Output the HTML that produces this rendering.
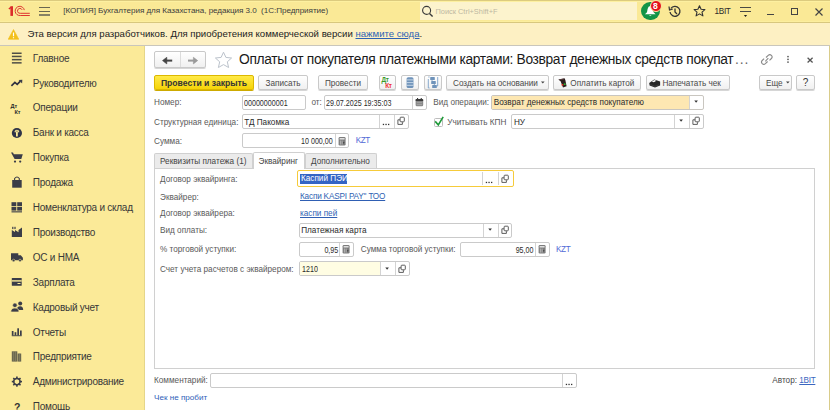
<!DOCTYPE html>
<html><head><meta charset="utf-8">
<style>
*{box-sizing:border-box;margin:0;padding:0}
html,body{width:830px;height:410px;overflow:hidden;background:#fff;font-family:"Liberation Sans",sans-serif;color:#333}
.a{position:absolute}
.t{position:absolute;white-space:pre;line-height:1}
#top{left:0;top:0;width:830px;height:23px;background:#fae996;border-top:1px solid #dccb7e;border-bottom:1px solid #d8c77e;box-shadow:inset 0 1px 0 #fdf0a0, inset 0 -1px 0 #fcee9e}
#warn{left:0;top:23px;width:830px;height:23px;background:#fdf0c3;border-bottom:1px solid #c9c6bc}
#side{left:0;top:46px;width:145px;height:364px;background:#fbea98;border-right:1px solid #e5d68a}
#form{left:145px;top:46px;width:684px;height:364px;background:#fff}
#rstrip{left:829px;top:46px;width:1px;height:364px;background:#d9cc8a}
.sn{font-size:10px;letter-spacing:-0.25px;color:#383838}
.btn{position:absolute;height:15px;border:1px solid #c6c6c6;border-radius:2px;background:linear-gradient(#fff,#f1f1f1);box-shadow:0 1px 0 #d9d9d9;font-size:8.3px;color:#444;text-align:center;line-height:13px;white-space:pre}
.fld{position:absolute;height:14.5px;border:1px solid #c9c9c9;border-radius:2px;background:#fff;font-size:8.2px;color:#2b2b2b;line-height:14px;white-space:pre;overflow:hidden}
.lbl{font-size:8.2px;color:#5a5a5a}
.sep{position:absolute;top:0;bottom:0;width:1px;background:#d5d5d5}
.lnk{font-size:8.2px;color:#2f5fb3;text-decoration:underline}
.fb{border-radius:2px}
</style></head><body>
<div id="top" class="a"></div>
<div id="warn" class="a"></div>
<div id="side" class="a"></div>
<div id="form" class="a"></div>
<div id="rstrip" class="a"></div>

<!-- top bar -->
<svg class="a" style="left:0;top:0" width="34" height="22" viewBox="0 0 34 22">
 <rect x="10.4" y="6.2" width="2.6" height="9.7" fill="#dc2b2b"/>
 <path d="M8.9 9 L11 7.2" stroke="#dc2b2b" stroke-width="1.5" fill="none"/>
 <path d="M24.3 10.1 A4.6 4.6 0 1 0 20.3 15.5 L29.8 15.5" stroke="#dc2b2b" stroke-width="0.95" fill="none"/>
 <path d="M22.2 9.9 A2.45 2.45 0 1 0 20.3 13.3 L29.8 13.3" stroke="#dc2b2b" stroke-width="0.95" fill="none"/>
</svg>
<div class="a" style="left:39.2px;top:7px;width:10.6px;height:1.2px;background:#6a6650"></div>
<div class="a" style="left:39.2px;top:10.9px;width:10.6px;height:1.2px;background:#6a6650"></div>
<div class="a" style="left:39.2px;top:14.4px;width:10.6px;height:1.2px;background:#878164"></div>
<div class="t" style="left:63.3px;top:6.8px;font-size:8.1px;letter-spacing:-0.05px;color:#3d3d3d">[КОПИЯ] Бухгалтерия для Казахстана, редакция 3.0  (1С:Предприятие)</div>
<div class="a" style="left:420px;top:2px;width:217px;height:18px;background:#fcf3cd"></div>
<svg class="a" style="left:421px;top:5px" width="13" height="13" viewBox="0 0 13 13"><circle cx="5.6" cy="5.4" r="4" stroke="#3a3a3a" stroke-width="1.1" fill="none"/><path d="M8.5 8.4 L11.6 11.5" stroke="#3a3a3a" stroke-width="1.4"/></svg>
<div class="t" style="left:435.5px;top:7.5px;font-size:7.4px;color:#bdb8a2">Поиск Ctrl+Shift+F</div>
<!-- bell -->
<div class="a" style="left:641.3px;top:1.8px;width:18.5px;height:18.5px;border-radius:50%;background:#129447"></div>
<svg class="a" style="left:640px;top:0" width="24" height="22" viewBox="640 0 24 22"><path d="M645 14.3 L647 12.2 L647.6 9 Q648.2 6.2 650.3 6 Q652.4 6.2 653 9 L653.6 12.2 L655.6 14.3 Z" fill="#fff"/><path d="M649 15.2 Q650.3 16.6 651.6 15.2 Z" fill="#fff"/></svg>
<div class="a" style="left:649.6px;top:0.4px;width:12px;height:12px;border-radius:50%;background:#e5121a;border:0.8px solid #fbe9a6"></div>
<div class="t" style="left:652.9px;top:2.4px;font-size:8.6px;font-weight:bold;color:#fff">8</div>
<svg class="a" style="left:668px;top:5px" width="14" height="13" viewBox="0 0 14 13"><path d="M2.8 3.5 A5 5 0 1 1 2 7" stroke="#333" stroke-width="1.3" fill="none"/><path d="M1 1.5 L1.5 5 L4.8 4" stroke="#333" stroke-width="1.2" fill="none"/><path d="M7 3.5 L7 7 L9 9" stroke="#333" stroke-width="1.3" fill="none"/></svg>
<svg class="a" style="left:692.5px;top:5px" width="13" height="12" viewBox="0 0 13 12"><path d="M6.5 0.8 L8.1 4.3 L11.9 4.6 L9 7.1 L9.9 10.9 L6.5 8.9 L3.1 10.9 L4 7.1 L1.1 4.6 L4.9 4.3 Z" stroke="#333" stroke-width="1.1" fill="none" stroke-linejoin="round"/></svg>
<div class="t" style="left:714.6px;top:7.9px;font-size:8.2px;letter-spacing:-0.35px;color:#2a2a2a">1BIT</div>
<div class="a" style="left:740.4px;top:7px;width:10.4px;height:1.2px;background:#4a4a44"></div><div class="a" style="left:740.4px;top:10.9px;width:10.4px;height:1.2px;background:#4a4a44"></div><svg class="a" style="left:743px;top:13.5px" width="5" height="4" viewBox="0 0 5 4"><path d="M0.9 1 H4.1 L2.5 3 Z" fill="#222"/></svg>
<div class="a" style="left:767px;top:14px;width:7px;height:1.2px;background:#444"></div>
<div class="a" style="left:791px;top:8.4px;width:7px;height:6.4px;border:1.2px solid #444"></div>
<svg class="a" style="left:815px;top:7.5px" width="8" height="8" viewBox="0 0 8 8"><path d="M0.5 0.5 L7.5 7.5 M7.5 0.5 L0.5 7.5" stroke="#444" stroke-width="1.2"/></svg>

<!-- warning -->
<svg class="a" style="left:8px;top:28.5px" width="11" height="11" viewBox="0 0 11 11"><path d="M5.5 0.5 L10.8 10.3 L0.2 10.3 Z" fill="#f3c01a" stroke="#f3c01a" stroke-width="0.6" stroke-linejoin="round"/><path d="M5.5 3.5 V7.2 M5.5 8.2 V9.3" stroke="#fff" stroke-width="1.2"/></svg>
<div class="t" style="left:27.4px;top:28.9px;font-size:9.6px;color:#222">Эта версия для разработчиков. Для приобретения коммерческой версии <span style="color:#2d62b5;text-decoration:underline">нажмите сюда</span>.</div>

<!-- sidebar -->
<div class="t sn" style="left:32.8px;top:53.6px">Главное</div>
<div class="t sn" style="left:32.8px;top:78.5px">Руководителю</div>
<div class="t sn" style="left:32.8px;top:103.4px">Операции</div>
<div class="t sn" style="left:32.8px;top:128.3px">Банк и касса</div>
<div class="t sn" style="left:32.8px;top:153.2px">Покупка</div>
<div class="t sn" style="left:32.8px;top:178.1px">Продажа</div>
<div class="t sn" style="left:32.8px;top:203.0px">Номенклатура и склад</div>
<div class="t sn" style="left:32.8px;top:227.9px">Производство</div>
<div class="t sn" style="left:32.8px;top:252.8px">ОС и НМА</div>
<div class="t sn" style="left:32.8px;top:277.7px">Зарплата</div>
<div class="t sn" style="left:32.8px;top:302.6px">Кадровый учет</div>
<div class="t sn" style="left:32.8px;top:327.5px">Отчеты</div>
<div class="t sn" style="left:32.8px;top:352.4px">Предприятие</div>
<div class="t sn" style="left:32.8px;top:377.3px">Администрирование</div>
<div class="t sn" style="left:32.8px;top:402.2px">Помощь</div>
<svg class="a" style="left:0;top:0" width="30" height="410" viewBox="0 0 30 410">
<g fill="#3b3d48">
 <rect x="11.9" y="52.5" width="9.7" height="1.5" fill="#4f4e46"/>
 <rect x="11.9" y="55.7" width="9.7" height="1.5" fill="#4f4e46"/>
 <rect x="11.9" y="58.9" width="9.7" height="1.5" fill="#4f4e46"/>
 <rect x="11.9" y="62.1" width="9.7" height="1.5" fill="#4f4e46"/>
 <path d="M11.4 85.8 L14.9 82.4 L17.2 84.3 L20.4 81.1" stroke="#2f3140" stroke-width="1.7" fill="none"/>
 <path d="M18.6 80 L22.3 79.8 L22.1 83.5 Z"/>
 <text x="10.6" y="108.3" font-family="Liberation Sans" font-weight="bold" font-size="5.6" letter-spacing="-0.2" fill="#2a2a2a">Дт</text>
 <text x="14.6" y="113.5" font-family="Liberation Sans" font-weight="bold" font-size="5.6" letter-spacing="-0.2" fill="#2a2a2a">Кт</text>
 <circle cx="16.9" cy="133" r="5.1" fill="#2f3447"/>
 <path d="M14.6 131.6 Q14.6 129.8 16.9 129.8 Q19.2 129.8 19.2 131.6 V132.3 H17.8 V136.6 H16 V132.3 H14.6 Z" fill="#fbea98"/><path d="M15.6 131.2 H18.2" stroke="#2f3447" stroke-width="0.5"/>
 <path d="M11 152.5 L13 152.5 L13.8 154.3 L22.8 154.3 L21.3 159 L14.6 159 Z"/>
 <circle cx="15" cy="161.6" r="1.1"/><circle cx="20.2" cy="161.6" r="1.1"/>
 <path d="M12.2 180 H21.7 V187.7 H12.2 Z"/>
 <path d="M14.6 180 V178.5 Q17 175.5 19.3 178.5 V180" stroke="#3b3d48" stroke-width="1.1" fill="none"/>
 <rect x="11.5" y="202.2" width="4.8" height="3.9"/><rect x="17.2" y="202.2" width="4.8" height="3.9"/>
 <rect x="11.5" y="206.9" width="4.8" height="3.7"/><rect x="17.2" y="206.9" width="4.8" height="3.7"/>
 <rect x="11.5" y="211.3" width="10.5" height="1.1"/>
 <path d="M11.8 237.1 V230 L15 232 V230 L18.5 232.2 V230 L22 227.5 V237.1 Z"/>
 <rect x="12.2" y="226.8" width="1.2" height="2.3"/><rect x="14.4" y="226.8" width="1.2" height="2.3"/>
 <path d="M11 253.3 H18.3 V255.2 H20.8 L22.9 257.7 V260.2 H11 Z"/>
 <circle cx="13.6" cy="260.5" r="1.3" stroke="#fbea98" stroke-width="0.5"/><circle cx="20" cy="260.5" r="1.3" stroke="#fbea98" stroke-width="0.5"/>
 <rect x="11.8" y="278" width="9.9" height="7.7" rx="0.5"/>
 <rect x="11.8" y="280.2" width="9.9" height="1.4" fill="#fbea98"/>
 <rect x="17.5" y="283" width="3" height="1" fill="#fbea98"/>
 <circle cx="20.2" cy="303.4" r="2"/><path d="M16.8 310 Q16.8 306.2 20.2 306.2 Q23.2 306.2 23.2 310 Z"/>
 <circle cx="14.9" cy="305.2" r="2.3" stroke="#fbea98" stroke-width="0.7"/><path d="M10.8 312 Q10.8 308 14.9 308 Q19 308 19 312 Z" stroke="#fbea98" stroke-width="0.7"/>
 <rect x="11.8" y="331" width="1.7" height="4.5"/><rect x="14.6" y="332.2" width="1.7" height="3.3"/><rect x="17.3" y="328.3" width="1.7" height="7.2"/><rect x="20" y="330.5" width="1.7" height="5"/>
 <rect x="11.8" y="335.3" width="9.9" height="0.9"/>
 <rect x="11.8" y="351.3" width="5.5" height="10.3" fill="#6a674f"/><rect x="17.6" y="353.5" width="3.6" height="8.1" fill="#6a674f"/>
 <path d="M13.6 351.3 V361.6 M15.5 351.3 V361.6 M19.4 353.5 V361.6" stroke="#9a9470" stroke-width="0.5"/>
 <g transform="translate(16.9 381.6)"><rect x="-0.8" y="-5.1" width="1.6" height="2.6" transform="rotate(0)"/><rect x="-0.8" y="-5.1" width="1.6" height="2.6" transform="rotate(45)"/><rect x="-0.8" y="-5.1" width="1.6" height="2.6" transform="rotate(90)"/><rect x="-0.8" y="-5.1" width="1.6" height="2.6" transform="rotate(135)"/><rect x="-0.8" y="-5.1" width="1.6" height="2.6" transform="rotate(180)"/><rect x="-0.8" y="-5.1" width="1.6" height="2.6" transform="rotate(225)"/><rect x="-0.8" y="-5.1" width="1.6" height="2.6" transform="rotate(270)"/><rect x="-0.8" y="-5.1" width="1.6" height="2.6" transform="rotate(315)"/><circle r="3.2" stroke="#3b3d48" stroke-width="1.5" fill="none"/></g>
 <text x="14" y="411" font-family="Liberation Sans" font-weight="bold" font-size="10.5" fill="#333">?</text>
</g>
</svg>

<!-- form -->
<div class="a" style="left:154px;top:51.3px;width:52.4px;height:17.2px;border:1px solid #c9c9c9;border-radius:2px;background:linear-gradient(#fff,#f0f0f0);box-shadow:0 1px 0 #d6d6d6"></div>
<div class="a" style="left:179.6px;top:52.3px;width:1px;height:15.2px;background:#dcdcdc"></div>
<svg class="a" style="left:160px;top:55px" width="14" height="11" viewBox="0 0 14 11"><path d="M2.5 5.6 L6.8 2.3 L6.8 8.9 Z" fill="#444" stroke="#444" stroke-width="0.6" stroke-linejoin="round"/><rect x="5.5" y="4.6" width="6.7" height="2" fill="#444"/></svg>
<svg class="a" style="left:186px;top:55px" width="14" height="11" viewBox="0 0 14 11"><path d="M11.7 5.6 L7.4 2.3 L7.4 8.9 Z" fill="#9a9a9a" stroke="#9a9a9a" stroke-width="0.6" stroke-linejoin="round"/><rect x="2" y="4.6" width="6.7" height="2" fill="#9a9a9a"/></svg>
<svg class="a" style="left:214px;top:51px" width="19" height="18" viewBox="0 0 19 18"><path d="M9.5 1.2 L11.9 6.4 L17.6 7 L13.3 10.8 L14.6 16.5 L9.5 13.6 L4.4 16.5 L5.7 10.8 L1.4 7 L7.1 6.4 Z" stroke="#bcc3cc" stroke-width="1" fill="none" stroke-linejoin="round"/></svg>
<div class="t" style="left:239px;top:52.6px;font-size:13.8px;letter-spacing:-0.34px;color:#1a1a1a">Оплаты от покупателя платежными картами: Возврат денежных средств покупат<span style="color:#666;letter-spacing:0.9px;margin-left:1.6px">...</span></div>
<svg class="a" style="left:760px;top:53px" width="14" height="13" viewBox="0 0 14 13"><path d="M6 4.5 L8.2 2.3 Q9.8 0.8 11.4 2.3 Q12.9 3.9 11.4 5.5 L9.5 7.4 M7.6 8.5 L5.4 10.7 Q3.8 12.2 2.2 10.7 Q0.7 9.1 2.2 7.5 L4.1 5.6 M5.3 8.3 L8.3 5.1" stroke="#8a8a8a" stroke-width="1.1" fill="none"/></svg>
<svg class="a" style="left:784px;top:52px" width="8" height="14" viewBox="784 52 8 14"><circle cx="788" cy="56.6" r="0.85" fill="#555"/><circle cx="788" cy="59.35" r="0.85" fill="#555"/><circle cx="788" cy="62.1" r="0.85" fill="#555"/></svg>
<svg class="a" style="left:807px;top:56.5px" width="7" height="7" viewBox="0 0 7 7"><path d="M0.6 0.8 L5.6 5.4 M5.6 0.8 L0.6 5.4" stroke="#555" stroke-width="1.3"/></svg>
<div class="a" style="left:154px;top:75px;width:100px;height:15px;border:1px solid #dcb800;background:linear-gradient(#ffea48,#f6d408);box-shadow:0 1px 0 #cdaa00;border-radius:2px"></div>
<div class="t" style="left:154px;width:100px;text-align:center;top:79.30px;font-size:8.6px;font-weight:bold;color:#353535;">Провести и закрыть</div>
<div class="a" style="left:258px;top:75px;width:50px;height:15px;border:1px solid #c9c9c9;background:linear-gradient(#fff,#f0f0f0);box-shadow:0 1px 0 #d6d6d6;border-radius:2px"></div>
<div class="t" style="left:258px;width:50px;text-align:center;top:79.50px;font-size:8.2px;color:#4a4a4a;">Записать</div>
<div class="a" style="left:318px;top:75px;width:50px;height:15px;border:1px solid #c9c9c9;background:linear-gradient(#fff,#f0f0f0);box-shadow:0 1px 0 #d6d6d6;border-radius:2px"></div>
<div class="t" style="left:318px;width:50px;text-align:center;top:79.50px;font-size:8.2px;color:#4a4a4a;">Провести</div>
<div class="a" style="left:378.8px;top:75px;width:17.7px;height:15px;border:1px solid #c9c9c9;background:linear-gradient(#fff,#f0f0f0);box-shadow:0 1px 0 #d6d6d6;border-radius:2px"></div>
<svg class="a" style="left:378.8px;top:75px" width="18" height="15" viewBox="0 0 18 15"><text x="2.6" y="7.1" font-family="Liberation Sans" font-weight="bold" font-size="6.4" fill="#3a9a2a" letter-spacing="-0.3">Дт</text><text x="6.2" y="12.7" font-family="Liberation Sans" font-weight="bold" font-size="6.4" fill="#f03030" letter-spacing="-0.3">Кт</text></svg>
<div class="a" style="left:401.3px;top:75px;width:18px;height:15px;border:1px solid #c9c9c9;background:linear-gradient(#fff,#f0f0f0);box-shadow:0 1px 0 #d6d6d6;border-radius:2px"></div>
<svg class="a" style="left:401.3px;top:75px" width="18" height="15" viewBox="0 0 18 15"><rect x="5.6" y="2.2" width="6.9" height="10.8" rx="1.6" fill="#6f93ba"/><path d="M5.6 4.9 H12.5 M5.6 7.6 H12.5 M5.6 10.3 H12.5" stroke="#dbe6f0" stroke-width="0.8"/></svg>
<div class="a" style="left:424.2px;top:75px;width:17.4px;height:15px;border:1px solid #c9c9c9;background:linear-gradient(#fff,#f0f0f0);box-shadow:0 1px 0 #d6d6d6;border-radius:2px"></div>
<svg class="a" style="left:424.2px;top:75px" width="18" height="15" viewBox="0 0 18 15"><path d="M4.3 4 V13 H5.6 M13.7 2 V11 H12.5 M4.3 2 H5.6" stroke="#7aa0c8" stroke-width="0.9" fill="none"/><rect x="6.2" y="2" width="4.6" height="3.1" rx="0.6" fill="#6f93ba"/><rect x="7.2" y="6" width="4.6" height="3" rx="0.6" fill="#6f93ba"/><rect x="8.2" y="9.9" width="4.6" height="3.1" rx="0.6" fill="#6f93ba"/><path d="M8 5 V6 M10.3 9 V10" stroke="#6f93ba" stroke-width="0.8"/></svg>
<div class="a" style="left:446px;top:75px;width:103px;height:15px;border:1px solid #c9c9c9;background:linear-gradient(#fff,#f0f0f0);box-shadow:0 1px 0 #d6d6d6;border-radius:2px"></div>
<div class="t" style="left:453px;top:79.50px;font-size:8.2px;color:#4a4a4a;">Создать на основании</div>
<svg class="a" style="left:540.3px;top:80.2px" width="6" height="5" viewBox="0 0 6 5"><path d="M1 1.5 H4.6 L2.8 3.6 Z" fill="#444"/></svg>
<div class="a" style="left:553.2px;top:75px;width:88px;height:15px;border:1px solid #c9c9c9;background:linear-gradient(#fff,#f0f0f0);box-shadow:0 1px 0 #d6d6d6;border-radius:2px"></div>
<div class="t" style="left:570.3px;top:79.50px;font-size:8.2px;color:#4a4a4a;">Оплатить картой</div>
<svg class="a" style="left:550px;top:75px" width="20" height="15" viewBox="550 75 20 15"><path d="M558.3 79.4 L564.6 78.2 L565.4 80.2 L566.6 86.2 L563 87.6 L560.6 81.2 Z" fill="#2c1c1c"/><path d="M559.5 79.8 L564 79" stroke="#6a4a4a" stroke-width="0.7"/><rect x="561.6" y="84" width="1.8" height="1.6" fill="#e03020"/><rect x="563.8" y="83.4" width="1.8" height="1.6" fill="#30b030"/></svg>
<div class="a" style="left:646.2px;top:75px;width:83.8px;height:15px;border:1px solid #c9c9c9;background:linear-gradient(#fff,#f0f0f0);box-shadow:0 1px 0 #d6d6d6;border-radius:2px"></div>
<div class="t" style="left:662.4px;top:79.50px;font-size:8.2px;color:#4a4a4a;">Напечатать чек</div>
<svg class="a" style="left:646px;top:75px" width="16" height="15" viewBox="646 75 16 15"><path d="M649.2 83 L654.2 79.6 L660.1 81.6 L660.1 85.6 L655 87.6 L649.6 85.6 Z" fill="#262626"/><path d="M651.8 81.4 L654.4 80 L656.4 80.8 L653.8 82.2 Z" fill="#fff"/><path d="M650.5 84.6 L655 86.4 L659 84.8" stroke="#555" stroke-width="0.5" fill="none"/></svg>
<div class="a" style="left:759px;top:75px;width:33px;height:15px;border:1px solid #c9c9c9;background:linear-gradient(#fff,#f0f0f0);box-shadow:0 1px 0 #d6d6d6;border-radius:2px"></div>
<div class="t" style="left:766px;top:79.50px;font-size:8.2px;color:#4a4a4a;">Еще</div>
<svg class="a" style="left:784.6px;top:80.2px" width="6" height="5" viewBox="0 0 6 5"><path d="M1 1.5 H4.6 L2.8 3.6 Z" fill="#444"/></svg>
<div class="a" style="left:796px;top:75px;width:19px;height:15px;border:1px solid #c9c9c9;background:linear-gradient(#fff,#f0f0f0);box-shadow:0 1px 0 #d6d6d6;border-radius:2px"></div>
<div class="t" style="left:796px;width:19px;text-align:center;top:77.6px;font-size:10px;color:#333">?</div>
<div class="t" style="left:154px;top:98.8px;font-size:8.2px;color:#5a5a5a;letter-spacing:0px">Номер:</div>
<div class="a fb" style="left:241.6px;top:94.8px;width:64px;height:14.8px;border:1px solid #cacaca;background:#fff"></div>
<div class="t" style="left:243.79999999999998px;top:97.80px;font-size:9.4px;color:#2b2b2b;letter-spacing:0px;transform:scaleX(0.76);transform-origin:left top;">00000000001</div>
<div class="t" style="left:311.5px;top:98.8px;font-size:8.2px;color:#5a5a5a;letter-spacing:0px">от:</div>
<div class="a fb" style="left:324px;top:94.8px;width:102.5px;height:14.8px;border:1px solid #cacaca;background:#fff"></div>
<div class="t" style="left:326.2px;top:97.80px;font-size:9.4px;color:#2b2b2b;letter-spacing:0px;transform:scaleX(0.76);transform-origin:left top;">29.07.2025 19:35:03</div>
<div class="a" style="left:411.5px;top:95.8px;width:1px;height:12.8px;background:#d3d3d3"></div>
<svg class="a" style="left:411.5px;top:95.1px" width="15" height="15" viewBox="0 0 15 15"><rect x="3.6" y="3.9" width="7.6" height="7.4" rx="1.3" fill="#8a8a8a"/><rect x="3.6" y="3.9" width="7.6" height="2.2" rx="0.9" fill="#3a3a3a"/><rect x="5" y="3" width="1.1" height="1.5" fill="#3a3a3a"/><rect x="8.7" y="3" width="1.1" height="1.5" fill="#3a3a3a"/><path d="M4.8 7.6 H10 M4.8 9.5 H10" stroke="#b0b0b0" stroke-width="0.6"/></svg>
<div class="t" style="left:433.3px;top:98.8px;font-size:8.2px;color:#5a5a5a;letter-spacing:0px">Вид операции:</div>
<div class="a fb" style="left:491.2px;top:94.8px;width:213px;height:14.8px;border:1px solid #c9c6c0;background:#fff"></div>
<div class="a" style="left:492.2px;top:95.8px;width:197px;height:12.8px;background:#fde7b2"></div>
<div class="t" style="left:493.7px;top:99.30px;font-size:8.2px;color:#2b2b2b;letter-spacing:0px;">Возврат денежных средств покупателю</div>
<div class="a" style="left:689.2px;top:95.8px;width:1px;height:12.8px;background:#d3d3d3"></div>
<svg class="a" style="left:689.2px;top:95.1px" width="15" height="15" viewBox="0 0 15 15"><path d="M5.3 5.6 H8.9 L7.1 7.8 Z" fill="#333"/></svg>
<div class="t" style="left:154px;top:118.5px;font-size:8.2px;color:#5a5a5a;letter-spacing:0px">Структурная единица:</div>
<div class="a fb" style="left:241.7px;top:114.0px;width:167px;height:14.8px;border:1px solid #cacaca;background:#fff"></div>
<div class="t" style="left:244.2px;top:118.50px;font-size:8.2px;color:#2b2b2b;letter-spacing:0px;">ТД Пакомка</div>
<div class="a" style="left:378.7px;top:115.0px;width:1px;height:12.8px;background:#d3d3d3"></div>
<svg class="a" style="left:378.7px;top:114.3px" width="15" height="15" viewBox="0 0 15 15"><rect x="3.8" y="9.8" width="1.3" height="1.3" fill="#333"/><rect x="6.4" y="9.8" width="1.3" height="1.3" fill="#333"/><rect x="9" y="9.8" width="1.3" height="1.3" fill="#333"/></svg>
<div class="a" style="left:393.7px;top:115.0px;width:1px;height:12.8px;background:#d3d3d3"></div>
<svg class="a" style="left:393.7px;top:114.3px" width="15" height="15" viewBox="0 0 15 15"><path d="M6.1 5.8 H3.9 V10.4 H8.4 V8.2" stroke="#555" stroke-width="0.95" fill="none"/><rect x="6.1" y="3.2" width="4.2" height="4.6" rx="0.8" stroke="#555" stroke-width="0.95" fill="#fff"/></svg>
<div class="a" style="left:434px;top:117.6px;width:9px;height:9px;border:1px solid #bdbdbd;border-radius:1.5px;background:#fff"></div>
<svg class="a" style="left:433px;top:114.0px" width="12" height="14" viewBox="0 0 12 14"><path d="M2.2 7.4 L5.3 10.8 L10.2 2.8" stroke="#1f9a3a" stroke-width="1.6" fill="none"/></svg>
<div class="t" style="left:447.2px;top:118.5px;font-size:8.2px;color:#5a5a5a;letter-spacing:0px">Учитывать КПН</div>
<div class="a fb" style="left:511.4px;top:114.0px;width:192.8px;height:14.8px;border:1px solid #cacaca;background:#fff"></div>
<div class="t" style="left:513.9px;top:118.50px;font-size:8.2px;color:#2b2b2b;letter-spacing:0px;">НУ</div>
<div class="a" style="left:674.2px;top:115.0px;width:1px;height:12.8px;background:#d3d3d3"></div>
<svg class="a" style="left:674.2px;top:114.3px" width="15" height="15" viewBox="0 0 15 15"><path d="M5.3 5.6 H8.9 L7.1 7.8 Z" fill="#333"/></svg>
<div class="a" style="left:689.2px;top:115.0px;width:1px;height:12.8px;background:#d3d3d3"></div>
<svg class="a" style="left:689.2px;top:114.3px" width="15" height="15" viewBox="0 0 15 15"><path d="M6.1 5.8 H3.9 V10.4 H8.4 V8.2" stroke="#555" stroke-width="0.95" fill="none"/><rect x="6.1" y="3.2" width="4.2" height="4.6" rx="0.8" stroke="#555" stroke-width="0.95" fill="#fff"/></svg>
<div class="t" style="left:154px;top:137.7px;font-size:8.2px;color:#5a5a5a;letter-spacing:0px">Сумма:</div>
<div class="a fb" style="left:241.7px;top:133.2px;width:107.8px;height:14.8px;border:1px solid #cacaca;background:#fff"></div>
<div class="t" style="right:497.00px;top:136.20px;font-size:9.4px;color:#2b2b2b;letter-spacing:0px;transform:scaleX(0.76);transform-origin:right top;">10 000,00</div>
<div class="a" style="left:334.5px;top:134.2px;width:1px;height:12.8px;background:#d3d3d3"></div>
<svg class="a" style="left:334.5px;top:133.5px" width="15" height="15" viewBox="0 0 15 15"><rect x="3.6" y="3" width="7" height="8.6" rx="1.3" fill="#7c7c7c"/><rect x="4.6" y="4.1" width="5" height="1.4" fill="#e8e8e8"/><path d="M5.4 6.5 V10.6 M7.1 6.5 V10.6" stroke="#d0d0d0" stroke-width="0.7"/><path d="M8.3 7.8 L9.6 8.8 L8.3 9.8 Z" fill="#333"/></svg>
<div class="t" style="left:355.7px;top:136.79999999999998px;font-size:8.2px;letter-spacing:-0.45px;color:#5068d6">KZT</div>
<div class="a" style="left:154px;top:153.4px;width:99px;height:15.5px;background:#ebebeb;border:1px solid #d0d0d0;border-bottom:none;border-radius:2px 2px 0 0"></div>
<div class="t" style="left:160px;top:157.5px;font-size:8.2px;color:#444;letter-spacing:0px">Реквизиты платежа (1)</div>
<div class="a" style="left:305.2px;top:153.4px;width:72px;height:15.5px;background:#ebebeb;border:1px solid #d0d0d0;border-bottom:none;border-radius:2px 2px 0 0"></div>
<div class="t" style="left:311px;top:157.5px;font-size:8.2px;color:#444;letter-spacing:0px">Дополнительно</div>
<div class="a" style="left:154px;top:168.3px;width:661px;height:200.4px;border:1px solid #d0d0d0;background:#fff"></div>
<div class="a" style="left:252.8px;top:151.6px;width:52.4px;height:17.7px;background:#fff;border:1px solid #d0d0d0;border-bottom:none;border-radius:2px 2px 0 0"></div>
<div class="t" style="left:258.5px;top:157.5px;font-size:8.2px;color:#444;letter-spacing:0px">Эквайринг</div>
<div class="t" style="left:160px;top:176.2px;font-size:8.2px;color:#5a5a5a;letter-spacing:0px">Договор эквайринга:</div>
<div class="a" style="left:297.2px;top:170.1px;width:217.2px;height:17.4px;border:1.5px solid #f6cb3a;border-radius:2px;background:#fff"></div>
<div class="a" style="left:482.4px;top:172.3px;width:1px;height:13.1px;background:#d3d3d3"></div>
<div class="a" style="left:497.5px;top:172.3px;width:1px;height:13.1px;background:#d3d3d3"></div>
<div class="a" style="left:300.2px;top:174px;width:46.7px;height:9.7px;background:#3464c4"></div>
<div class="t" style="left:301px;top:175.3px;font-size:8.2px;color:#fff">Каспий ПЭЙ</div>
<svg class="a" style="left:482.4px;top:171.7px" width="15" height="15" viewBox="0 0 15 15"><rect x="3.8" y="9.8" width="1.3" height="1.3" fill="#333"/><rect x="6.4" y="9.8" width="1.3" height="1.3" fill="#333"/><rect x="9" y="9.8" width="1.3" height="1.3" fill="#333"/></svg>
<svg class="a" style="left:497.5px;top:171.7px" width="15" height="15" viewBox="0 0 15 15"><path d="M6.1 5.8 H3.9 V10.4 H8.4 V8.2" stroke="#555" stroke-width="0.95" fill="none"/><rect x="6.1" y="3.2" width="4.2" height="4.6" rx="0.8" stroke="#555" stroke-width="0.95" fill="#fff"/></svg>
<div class="t" style="left:160px;top:193.7px;font-size:8.2px;color:#5a5a5a;letter-spacing:0px">Эквайрер:</div>
<div class="t lnk" style="left:300px;top:193.2px;letter-spacing:-0.18px">Каспи KASPI PAY" ТОО</div>
<div class="t" style="left:160px;top:210.2px;font-size:8.2px;color:#5a5a5a;letter-spacing:0px">Договор эквайрера:</div>
<div class="t lnk" style="left:300px;top:209.7px">каспи пей</div>
<div class="t" style="left:160px;top:227.20000000000002px;font-size:8.2px;color:#5a5a5a;letter-spacing:0px">Вид оплаты:</div>
<div class="a fb" style="left:298.7px;top:222.9px;width:213.8px;height:14.8px;border:1px solid #cacaca;background:#fff"></div>
<div class="t" style="left:301.2px;top:227.40px;font-size:8.2px;color:#2b2b2b;letter-spacing:0px;">Платежная карта</div>
<div class="a" style="left:482.5px;top:223.9px;width:1px;height:12.8px;background:#d3d3d3"></div>
<svg class="a" style="left:482.5px;top:223.20000000000002px" width="15" height="15" viewBox="0 0 15 15"><path d="M5.3 5.6 H8.9 L7.1 7.8 Z" fill="#333"/></svg>
<div class="a" style="left:497.5px;top:223.9px;width:1px;height:12.8px;background:#d3d3d3"></div>
<svg class="a" style="left:497.5px;top:223.20000000000002px" width="15" height="15" viewBox="0 0 15 15"><path d="M6.1 5.8 H3.9 V10.4 H8.4 V8.2" stroke="#555" stroke-width="0.95" fill="none"/><rect x="6.1" y="3.2" width="4.2" height="4.6" rx="0.8" stroke="#555" stroke-width="0.95" fill="#fff"/></svg>
<div class="t" style="left:160px;top:246.3px;font-size:8.2px;color:#5a5a5a;letter-spacing:0px">% торговой уступки:</div>
<div class="a fb" style="left:298.7px;top:242.0px;width:55.6px;height:14.8px;border:1px solid #cacaca;background:#fff"></div>
<div class="t" style="right:492.20px;top:245.00px;font-size:9.4px;color:#2b2b2b;letter-spacing:0px;transform:scaleX(0.76);transform-origin:right top;">0,95</div>
<div class="a" style="left:339.3px;top:243.0px;width:1px;height:12.8px;background:#d3d3d3"></div>
<svg class="a" style="left:339.3px;top:242.3px" width="15" height="15" viewBox="0 0 15 15"><rect x="3.6" y="3" width="7" height="8.6" rx="1.3" fill="#7c7c7c"/><rect x="4.6" y="4.1" width="5" height="1.4" fill="#e8e8e8"/><path d="M5.4 6.5 V10.6 M7.1 6.5 V10.6" stroke="#d0d0d0" stroke-width="0.7"/><path d="M8.3 7.8 L9.6 8.8 L8.3 9.8 Z" fill="#333"/></svg>
<div class="t" style="left:360.8px;top:246.3px;font-size:8.2px;color:#5a5a5a;letter-spacing:0px">Сумма торговой уступки:</div>
<div class="a fb" style="left:459.5px;top:242.0px;width:90.6px;height:14.8px;border:1px solid #cacaca;background:#fff"></div>
<div class="t" style="right:296.40px;top:245.00px;font-size:9.4px;color:#2b2b2b;letter-spacing:0px;transform:scaleX(0.76);transform-origin:right top;">95,00</div>
<div class="a" style="left:535.1px;top:243.0px;width:1px;height:12.8px;background:#d3d3d3"></div>
<svg class="a" style="left:535.1px;top:242.3px" width="15" height="15" viewBox="0 0 15 15"><rect x="3.6" y="3" width="7" height="8.6" rx="1.3" fill="#7c7c7c"/><rect x="4.6" y="4.1" width="5" height="1.4" fill="#e8e8e8"/><path d="M5.4 6.5 V10.6 M7.1 6.5 V10.6" stroke="#d0d0d0" stroke-width="0.7"/><path d="M8.3 7.8 L9.6 8.8 L8.3 9.8 Z" fill="#333"/></svg>
<div class="t" style="left:556.1px;top:245.6px;font-size:8.2px;letter-spacing:-0.45px;color:#5068d6">KZT</div>
<div class="t" style="left:160px;top:265.5px;font-size:8.2px;color:#5a5a5a;letter-spacing:0px">Счет учета расчетов с эквайрером:</div>
<div class="a fb" style="left:299.1px;top:261.2px;width:111.2px;height:14.8px;border:1px solid #cacaca;background:#fff"></div>
<div class="a" style="left:300.1px;top:262.2px;width:80.2px;height:12.8px;background:#fffde3"></div>
<div class="t" style="left:301.6px;top:264.20px;font-size:9.4px;color:#2b2b2b;letter-spacing:0px;transform:scaleX(0.76);transform-origin:left top;">1210</div>
<div class="a" style="left:380.3px;top:262.2px;width:1px;height:12.8px;background:#d3d3d3"></div>
<svg class="a" style="left:380.3px;top:261.5px" width="15" height="15" viewBox="0 0 15 15"><path d="M5.3 5.6 H8.9 L7.1 7.8 Z" fill="#333"/></svg>
<div class="a" style="left:395.3px;top:262.2px;width:1px;height:12.8px;background:#d3d3d3"></div>
<svg class="a" style="left:395.3px;top:261.5px" width="15" height="15" viewBox="0 0 15 15"><path d="M6.1 5.8 H3.9 V10.4 H8.4 V8.2" stroke="#555" stroke-width="0.95" fill="none"/><rect x="6.1" y="3.2" width="4.2" height="4.6" rx="0.8" stroke="#555" stroke-width="0.95" fill="#fff"/></svg>
<div class="t" style="left:154px;top:377.2px;font-size:8.2px;color:#5a5a5a;letter-spacing:0px">Комментарий:</div>
<div class="a fb" style="left:209.6px;top:373.4px;width:367.8px;height:14.8px;border:1px solid #cacaca;background:#fff"></div>
<div class="a" style="left:562.4px;top:374.4px;width:1px;height:12.8px;background:#d3d3d3"></div>
<svg class="a" style="left:562.4px;top:373.7px" width="15" height="15" viewBox="0 0 15 15"><rect x="3.8" y="9.8" width="1.3" height="1.3" fill="#333"/><rect x="6.4" y="9.8" width="1.3" height="1.3" fill="#333"/><rect x="9" y="9.8" width="1.3" height="1.3" fill="#333"/></svg>
<div class="t" style="left:772.3px;top:376.9px;font-size:8.2px;color:#484848">Автор: <span style="color:#3a66c0;text-decoration:underline;letter-spacing:-0.3px">1BIT</span></div>
<div class="t" style="left:154px;top:393.6px;font-size:8.1px;color:#3060b8">Чек не пробит</div>
</body></html>
